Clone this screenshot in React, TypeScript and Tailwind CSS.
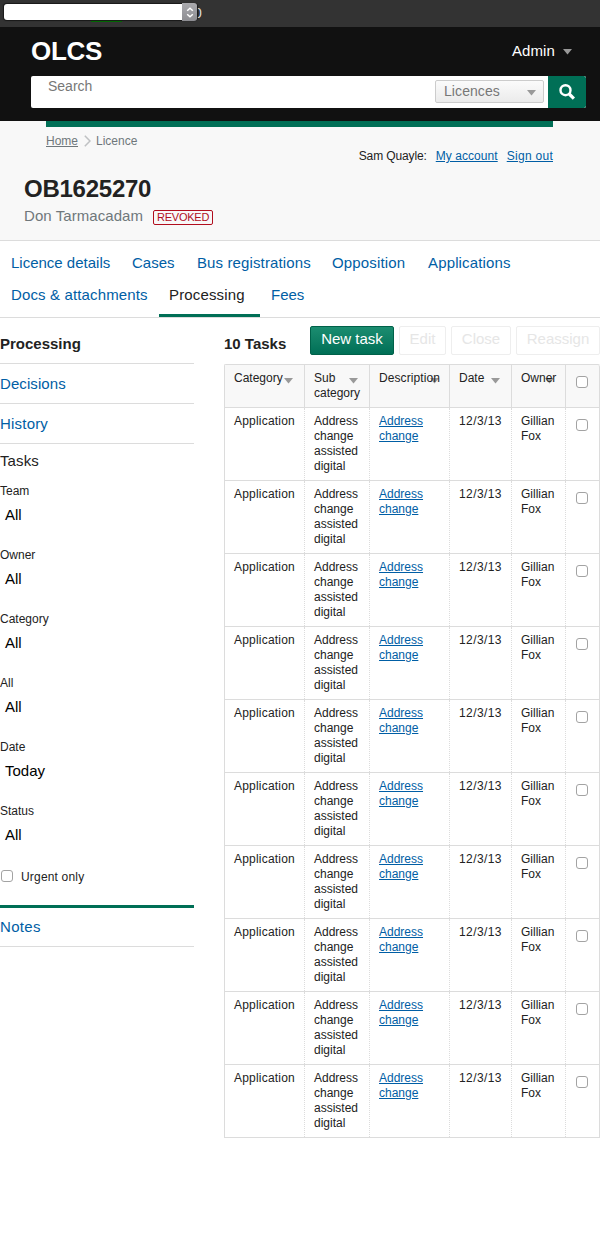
import React from "react";

function Caret({ className = "" }: { className?: string }) {
  return (
    <svg viewBox="0 0 9 6" className={`h-[6px] w-[9px] shrink-0 fill-[#999] ${className}`}>
      <path d="M0 0h9L4.5 5.5z" />
    </svg>
  );
}

function Box() {
  return <input type="checkbox" className="block h-[12px] w-[12px] appearance-none rounded-[3px] border border-[#a3a3a3] bg-white" />;
}

const tabs = [
  { label: "Licence details", cls: "w-[121px]" },
  { label: "Cases", cls: "w-[65px]" },
  { label: "Bus registrations", cls: "w-[135px] tracking-[0.12px]" },
  { label: "Opposition", cls: "w-[96px] tracking-[0.15px]" },
  { label: "Applications", cls: "tracking-[0.15px]" },
];

const filters = [
  ["Team", "All"],
  ["Owner", "All"],
  ["Category", "All"],
  ["All", "All"],
  ["Date", "Today"],
  ["Status", "All"],
];

const grid = "grid grid-cols-[80px_65px_80px_62px_54px_34px]";
const headCell = "relative border-r border-[#dcdcdc] pl-[9px] pt-[6px] h-full";
const bodyCell = "border-r border-dotted border-[#dcdcdc] pl-[9px] pt-[6px]";
const link = "text-[#005ea5] underline";

function TaskTable() {
  return (
    <div className="w-[376px] rounded-t-[2px] border-l border-t border-[#dcdcdc] text-[12px] leading-[15px]">
      <div className={`${grid} h-[43px] border-b border-[#dcdcdc] bg-[#f8f8f8]`}>
        <div className={headCell}>Category<Caret className="absolute left-[59px] top-[13px]" /></div>
        <div className={headCell}>Sub<br />category<Caret className="absolute left-[44px] top-[13px]" /></div>
        <div className={headCell}>
          <Caret className="absolute left-[60px] top-[13px] fill-[#777]" /><span className="relative tracking-[0.08px]">Description</span>
        </div>
        <div className={headCell}>Date<Caret className="absolute left-[41px] top-[13px]" /></div>
        <div className={headCell}>
          <Caret className="absolute left-[33px] top-[13px] fill-[#777]" /><span className="relative">Owner</span>
        </div>
        <div className="rounded-tr-[2px] border-r border-[#dcdcdc] pl-[10px] pt-[11px]"><Box /></div>
      </div>
      {Array.from({ length: 10 }, (_, i) => (
        <div key={i} className={`${grid} h-[73px] border-b border-[#dcdcdc]`}>
          <div className={`${bodyCell} tracking-[0.2px]`}>Application</div>
          <div className={bodyCell}>Address<br />change<br />assisted<br />digital</div>
          <div className={bodyCell}><a className={link}>Address<br />change</a></div>
          <div className={`${bodyCell} tracking-[0.4px]`}>12/3/13</div>
          <div className={bodyCell}>Gillian<br />Fox</div>
          <div className="border-r border-[#dcdcdc] pl-[10px] pt-[11px]"><Box /></div>
        </div>
      ))}
    </div>
  );
}

export default function App() {
  return (
    <div className="h-[1243px] w-[600px] overflow-hidden bg-white font-['Liberation_Sans',sans-serif] text-[15px] text-[#222]">
      <div className="relative h-[27px] bg-[#333]">
        <span className="absolute left-[194px] top-[4px] text-[14px] leading-[18px] text-[#ddd]">0</span>
        <div className="absolute left-[91px] top-[20px] h-[2px] w-[31px] bg-[#007000]" />
        <div className="absolute left-[4px] top-[4px] flex h-[16px] w-[193px] rounded-[3px] bg-white shadow-[0_0_1px_1px_#181818]">
          <div className="ml-auto -my-px flex h-[18px] w-[15px] items-center justify-center rounded-r-[3px] bg-gradient-to-b from-[#aaaaae] to-[#8d8d92]">
            <svg viewBox="0 0 8 11" className="h-[11px] w-[8px] fill-none stroke-white stroke-[1.5]">
              <path d="M1.2 3.7 4 1.2l2.8 2.5M1.2 7.3 4 9.8l2.8-2.5" />
            </svg>
          </div>
        </div>
      </div>

      <header className="h-[94px] bg-[#111] pl-[31px] pr-[14px] text-white">
        <div className="flex h-[49px] justify-between">
          <h1 className="pt-[9px] text-[26px] font-bold leading-[30px] tracking-[-0.3px]">OLCS</h1>
          <div className="flex pr-[14px] pt-[15px] leading-[18px]">
            <span className="mr-[8px] tracking-[0.1px]">Admin</span>
            <Caret className="mt-[7px]" />
          </div>
        </div>
        <div className="flex h-[32px] overflow-hidden rounded-[2px] bg-white">
          <span className="flex-1 pl-[17px] pt-[2px] text-[14px] leading-[17px] text-[#777]">Search</span>
          <div className="mr-[4px] mt-[4px] flex h-[23px] w-[109px] justify-between rounded-[2px] border border-[#ccc] bg-gradient-to-b from-[#fbfbfb] to-[#ebebeb] pl-[8px] pr-[7px] text-[14px] leading-[21px] tracking-[0.08px] text-[#777]">
            Licences
            <Caret className="mt-[9px]" />
          </div>
          <button className="flex w-[38px] items-center justify-center rounded-r-[2px] bg-[#006f56]">
            <svg viewBox="0 0 16 16" className="h-[16px] w-[16px] fill-none stroke-white">
              <circle cx="6.5" cy="6.2" r="5" strokeWidth="2.4" />
              <path d="m10.2 10 4.7 4.7" strokeWidth="3.2" />
            </svg>
          </button>
        </div>
      </header>

      <section className="h-[120px] border-b border-[#dcdcdc] bg-[#f8f8f8]">
        <div className="ml-[46px] h-[6px] w-[507px] bg-[#006f56]" />
        <div className="ml-[46px] flex h-[46px] w-[507px] justify-between text-[12px] leading-[15px]">
          <nav className="flex pt-[7px] text-[#6f777b]">
            <a className="underline">Home</a>
            <svg viewBox="0 0 7 12" className="ml-[6px] mr-[5px] mt-[1px] h-[12px] w-[7px] fill-none stroke-[#bfc1c3] stroke-[1.5]">
              <path d="m.8.8 5.2 5.2L.8 11.2" />
            </svg>
            <span>Licence</span>
          </nav>
          <div className="flex pt-[22px]">
            <span className="mr-[9px] tracking-[-0.12px]">Sam Quayle:</span>
            <a className={`${link} mr-[9px] tracking-[0.06px]`}>My account</a>
            <a className={`${link} tracking-[0.28px]`}>Sign out</a>
          </div>
        </div>
        <h2 className="ml-[24px] mt-px text-[24px] font-bold leading-[30px] tracking-[-0.25px]">OB1625270</h2>
        <div className="ml-[24px] mt-[3px] flex text-[#6f777b]">
          <span className="text-[15px] leading-[18px] tracking-[0.07px]">Don Tarmacadam</span>
          <span className="ml-[10px] mt-[3px] h-[15px] w-[60px] rounded-[2px] border border-[#b10e1e] text-center text-[11px] leading-[13px] tracking-[-0.25px] text-[#b10e1e]">REVOKED</span>
        </div>
      </section>

      <nav className="h-[77px] border-b border-[#dcdcdc] pl-[11px] leading-[18px] text-[#005ea5]">
        <div className="flex h-[32px] pt-[13px]">
          {tabs.map((t) => <a key={t.label} className={t.cls}>{t.label}</a>)}
        </div>
        <div className="flex h-[44px]">
          <a className="w-[148px] pt-[13px] tracking-[0.14px]">Docs &amp; attachments</a>
          <a className="w-[101px] border-b-[3px] border-[#006f56] pl-[10px] pt-[13px] tracking-[0.15px] text-[#222]">Processing</a>
          <a className="ml-[11px] pt-[13px]">Fees</a>
        </div>
      </nav>

      <main className="flex">
        <aside className="w-[194px] leading-[18px]">
          <h3 className="h-[46px] border-b border-[#dcdcdc] pt-[17px] font-bold">Processing</h3>
          <a className="block h-[40px] border-b border-[#dcdcdc] pt-[11px] tracking-[0.08px] text-[#005ea5]">Decisions</a>
          <a className="block h-[40px] border-b border-[#dcdcdc] pt-[11px] tracking-[0.2px] text-[#005ea5]">History</a>
          <div className="h-[464px] border-b-[3px] border-[#006f56] pt-[8px]">
            <div className="h-[32px] tracking-[0.1px]">Tasks</div>
            {filters.map(([label, value]) => (
              <div key={label} className="h-[64px]">
                <div className="text-[12px] leading-[15px]">{label}</div>
                <div className="pl-[5px] pt-[7px] text-black">{value}</div>
              </div>
            ))}
            <label className="flex pl-px text-[12px] leading-[15px]">
              <span className="mr-[8px] mt-[2px]"><Box /></span>
              <span className="pt-[2px] tracking-[0.18px]">Urgent only</span>
            </label>
          </div>
          <a className="block h-[39px] border-b border-[#dcdcdc] pt-[10px] tracking-[0.3px] text-[#005ea5]">Notes</a>
        </aside>
        <section className="ml-[30px] w-[376px]">
          <div className="flex h-[46px] pt-[8px]">
            <h3 className="w-[86px] pt-[9px] font-bold leading-[18px]">10 Tasks</h3>
            <div className="flex h-[29px] gap-[5px] text-center leading-[24px] text-[#e6e6e6]">
              <button className="w-[84px] rounded-[2px] border border-[#006149] bg-gradient-to-b from-[#1b8d70] to-[#006f56] text-white"><span className="block h-[27px]">New task</span></button>
              <button className="w-[47px] rounded-[2px] border border-[#eee]"><span className="block h-[27px]">Edit</span></button>
              <button className="w-[60px] rounded-[2px] border border-[#eee]"><span className="block h-[27px]">Close</span></button>
              <button className="w-[84px] rounded-[2px] border border-[#eee]"><span className="block h-[27px]">Reassign</span></button>
            </div>
          </div>
          <TaskTable />
        </section>
      </main>
    </div>
  );
}
